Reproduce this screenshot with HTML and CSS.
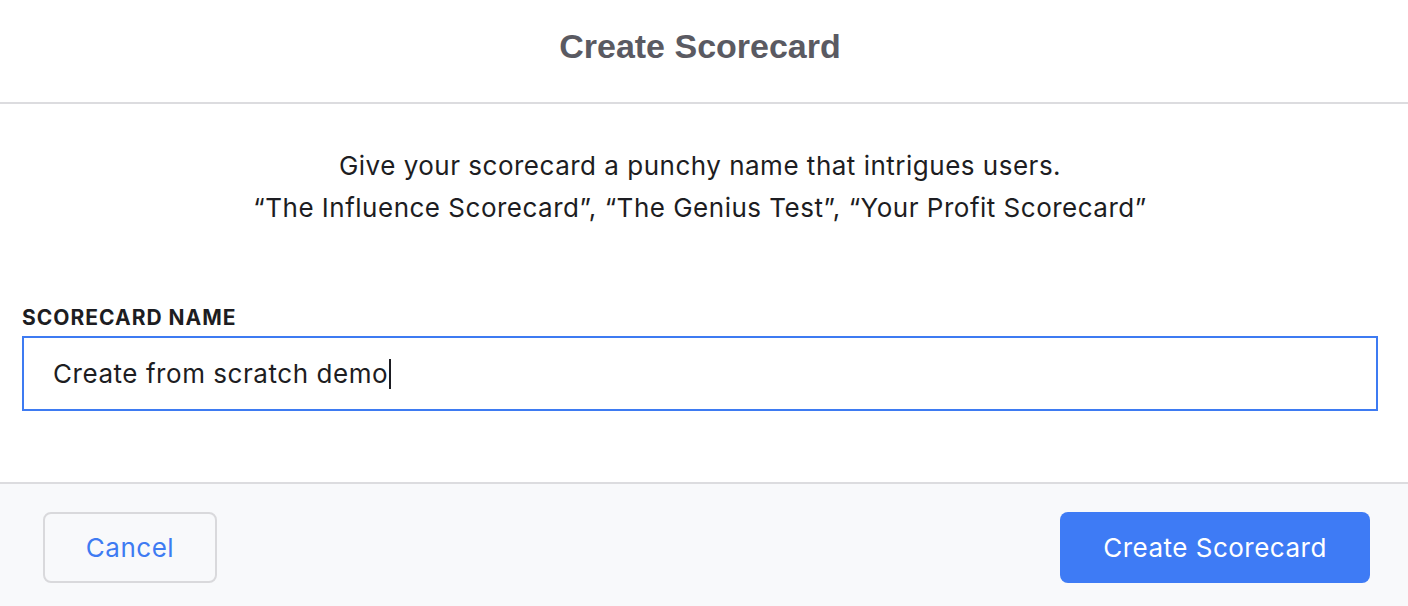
FILE: index.html
```html
<!DOCTYPE html>
<html lang="en">
<head>
<meta charset="utf-8">
<title>Create Scorecard</title>
<link rel="stylesheet" href="styles.css">
</head>
<body>
<div class="modal">
  <header class="modal-header">
    <h1 class="modal-title">Create Scorecard</h1>
  </header>
  <section class="modal-body">
    <p class="intro">Give your scorecard a punchy name that intrigues users.<br>“The Influence Scorecard”, “The Genius Test”, “Your Profit Scorecard”</p>
    <label class="field-label" for="name">SCORECARD NAME</label>
    <div class="input"><span class="input-text">Create from scratch demo</span><span class="caret"></span></div>
  </section>
  <footer class="modal-footer">
    <button class="btn btn-cancel">Cancel</button>
    <button class="btn btn-primary">Create Scorecard</button>
  </footer>
</div>
</body>
</html>
```
FILE: styles.css
```css
* { box-sizing: border-box; }
html, body { margin: 0; padding: 0; }
body {
  width: 1408px;
  height: 606px;
  background: #ffffff;
  font-family: Inter, "Noto Sans", sans-serif;
  color: #1d1d22;
  overflow: hidden;
}
.modal { display: flex; flex-direction: column; height: 606px; }
.modal-header {
  height: 104px;
  border-bottom: 2px solid #dcdcdf;
  display: flex;
  align-items: center;
  justify-content: center;
  padding-bottom: 10px;
  padding-right: 8px;
}
.modal-title {
  margin: 0;
  font-family: "Liberation Sans", Arial, sans-serif;
  font-weight: 700;
  font-size: 34px;
  color: #5a5a62;
}
.modal-body {
  height: 378px;
  padding: 41px 30px 0 22px;
  display: flex;
  flex-direction: column;
}
.intro {
  margin: 0;
  text-align: center;
  font-size: 26px;
  letter-spacing: 0.5px;
  line-height: 42px;
  color: #1d1d22;
}
.field-label {
  margin-top: 77px;
  font-weight: 700;
  font-size: 21px;
  letter-spacing: 1px;
  line-height: 24px;
  color: #1d1d22;
}
.input {
  margin-top: 6px;
  height: 75px;
  border: 2px solid #3e7bf2;
  display: flex;
  align-items: center;
  padding-left: 29px;
  font-size: 26px;
  letter-spacing: 0.55px;
  color: #1d1d22;
}
.caret {
  display: inline-block;
  width: 2px;
  height: 30px;
  background: #1d1d22;
  margin-left: 1px;
}
.modal-footer {
  flex: 1;
  background: #f8f9fb;
  border-top: 2px solid #dcdcdf;
  display: flex;
  justify-content: space-between;
  align-items: flex-start;
  padding: 28px 38px 0 43px;
}
.btn {
  height: 71px;
  border-radius: 8px;
  font-family: Inter, "Noto Sans", sans-serif;
  font-size: 26px;
  letter-spacing: 0.5px;
  cursor: pointer;
}
.btn-cancel {
  width: 174px;
  background: #f8f9fb;
  border: 2px solid #d9d9dc;
  color: #3e7bf2;
}
.btn-primary {
  width: 310px;
  background: #3e7bf5;
  border: none;
  color: #ffffff;
}
```
